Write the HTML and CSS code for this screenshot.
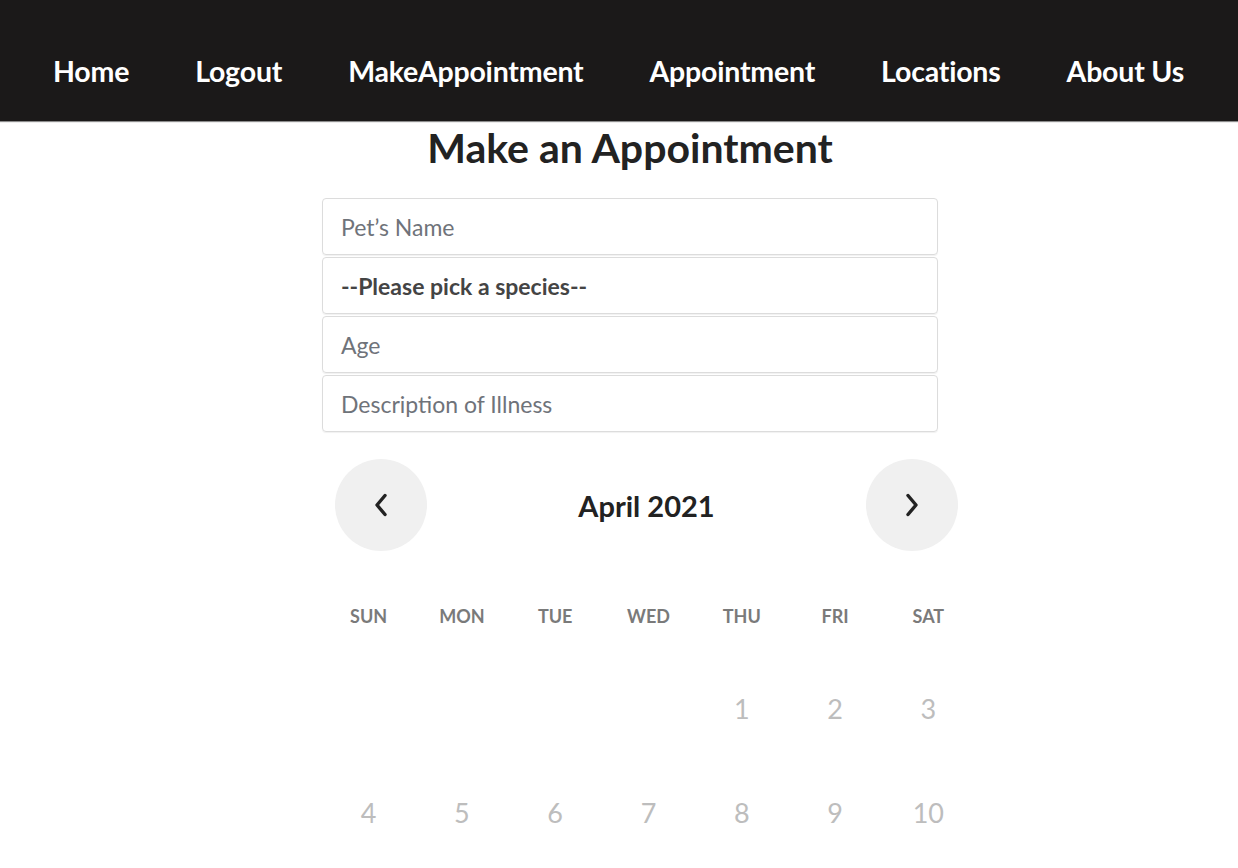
FILE: index.html
```html
<!DOCTYPE html>
<html lang="en">
<head>
<meta charset="utf-8">
<title>Make an Appointment</title>
<link rel="stylesheet" href="styles.css">
</head>
<body>
<nav class="nav">
  <a class="nav-link" href="#">Home</a>
  <a class="nav-link" href="#">Logout</a>
  <a class="nav-link" href="#">MakeAppointment</a>
  <a class="nav-link" href="#">Appointment</a>
  <a class="nav-link" href="#">Locations</a>
  <a class="nav-link" href="#">About Us</a>
</nav>
<main class="page">
  <div class="form">
    <h1 class="title">Make an Appointment</h1>
    <div class="field placeholder">Pet’s Name</div>
    <div class="field select">--Please pick a species--</div>
    <div class="field placeholder">Age</div>
    <div class="field placeholder">Description of Illness</div>
  </div>
  <section class="calendar">
    <div class="cal-head">
      <button class="cal-btn" aria-label="Previous month">
        <svg width="18" height="26" viewBox="0 0 18 26"><path d="M13 3.5 L5 13 L13 22.5" fill="none" stroke="#222" stroke-width="3.4" stroke-linecap="round" stroke-linejoin="round"/></svg>
      </button>
      <div class="cal-title">April 2021</div>
      <button class="cal-btn" aria-label="Next month">
        <svg width="18" height="26" viewBox="0 0 18 26"><path d="M5 3.5 L13 13 L5 22.5" fill="none" stroke="#222" stroke-width="3.4" stroke-linecap="round" stroke-linejoin="round"/></svg>
      </button>
    </div>
    <div class="cal-grid weekdays">
      <div>SUN</div><div>MON</div><div>TUE</div><div>WED</div><div>THU</div><div>FRI</div><div>SAT</div>
    </div>
    <div class="cal-grid days">
      <div></div><div></div><div></div><div></div><div>1</div><div>2</div><div>3</div>
      <div>4</div><div>5</div><div>6</div><div>7</div><div>8</div><div>9</div><div>10</div>
    </div>
  </section>
</main>
</body>
</html>
```
FILE: styles.css
```css
* { box-sizing: border-box; }
html, body { margin: 0; padding: 0; }
body {
  font-family: Lato, "Open Sans", sans-serif;
  background: #ffffff;
  color: #222;
  overflow: hidden;
}
.nav {
  height: 121px;
  background: #1b1919;
  display: flex;
  align-items: center;
  padding: 20px 0 0 53px;
  gap: 66px;
  box-shadow: 0 1px 1px rgba(0,0,0,0.45);
}
.nav-link {
  color: #ffffff;
  text-decoration: none;
  font-weight: 700;
  font-size: 28.5px;
  letter-spacing: -0.2px;
}
.page {
  padding-left: 322px;
}
.form {
  width: 616px;
  display: flex;
  flex-direction: column;
  gap: 2px;
}
.title {
  margin: 4px 0 25px;
  text-align: center;
  font-size: 41px;
  line-height: 46px;
  font-weight: 700;
  color: #222;
  letter-spacing: 0;
}
.field {
  height: 57px;
  border: 1px solid #dcdcdc;
  border-radius: 4px;
  padding: 0 18px;
  display: flex;
  align-items: center;
  font-size: 23px;
  box-shadow: 0 1px 1px rgba(0,0,0,0.06);
}
.placeholder { color: #6f737a; }
.select { color: #444; font-weight: 700; }
.calendar {
  width: 653px;
  margin-top: 27px;
}
.cal-head {
  display: flex;
  align-items: center;
  justify-content: space-between;
  padding: 0 17px 0 13px;
}
.cal-btn {
  width: 92px;
  height: 92px;
  border-radius: 50%;
  border: none;
  background: #f0f0f0;
  display: flex;
  align-items: center;
  justify-content: center;
  padding: 0;
}
.cal-title {
  font-size: 29px;
  font-weight: 700;
  color: #222;
  margin-left: 0;
}
.cal-grid {
  display: grid;
  grid-template-columns: repeat(7, 1fr);
  text-align: center;
}
.weekdays {
  margin-top: 45px;
  height: 40px;
  align-items: center;
  font-size: 18px;
  font-weight: 700;
  color: #7a7a7a;
}
.days {
  margin-top: 20px;
  grid-auto-rows: 104px;
  align-items: center;
  font-size: 27px;
  color: #bdbdbd;
}
```
